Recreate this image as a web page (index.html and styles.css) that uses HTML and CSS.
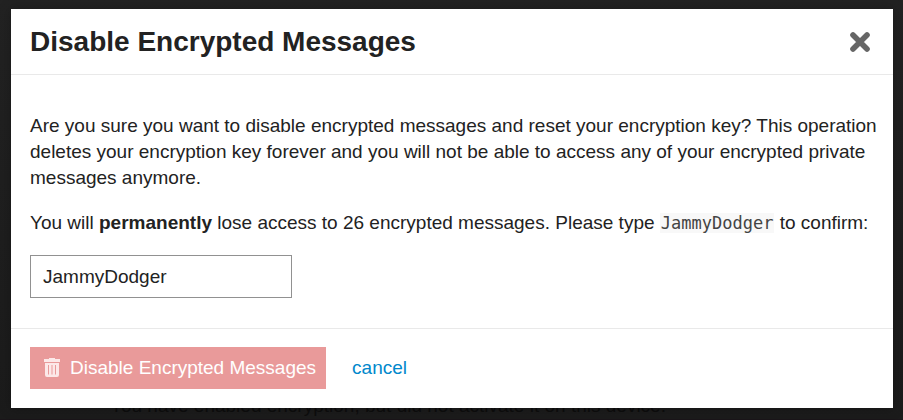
FILE: index.html
```
<!DOCTYPE html>
<html lang="en">
<head>
<meta charset="utf-8">
<title>Disable Encrypted Messages</title>
<link rel="stylesheet" href="styles.css">
</head>
<body>
<main class="page">
  <p class="notice">You have enabled encryption, but did not activate it on this device.</p>
</main>
<div class="overlay">
  <form class="modal" role="dialog" aria-labelledby="modal-title">
    <header class="modal-header">
      <h1 id="modal-title">Disable Encrypted Messages</h1>
      <button class="close" type="button" aria-label="Close">
        <svg width="20" height="20" viewBox="0 0 20 20"><path d="M3 3L17 17M17 3L3 17" stroke="currentColor" stroke-width="5.6" stroke-linecap="round"/></svg>
      </button>
    </header>
    <div class="modal-body">
      <p>Are you sure you want to disable encrypted messages and reset your encryption key? This operation deletes your encryption key forever and you will not be able to access any of your encrypted private messages anymore.</p>
      <p><label for="confirm">You will <b>permanently</b> lose access to 26 encrypted messages. Please type <code>JammyDodger</code> to confirm:</label></p>
      <input id="confirm" class="confirm" type="text" value="JammyDodger">
    </div>
    <footer class="modal-footer">
      <button class="danger" type="submit" disabled>
        <svg width="16" height="20" viewBox="0 0 16 20"><path fill="currentColor" fill-rule="evenodd" d="M0 1h5V0h6v1h5v3H0zM1 5h14v12q0 2-2 2H3q-2 0-2-2zM4 7v9.500h1V7zM7.500 7v9.500h1V7zM11 7v9.500h1V7z"/></svg>
        Disable Encrypted Messages
      </button>
      <a class="cancel" href="#">cancel</a>
    </footer>
  </form>
</div>
</body>
</html>
```
FILE: styles.css
```
* {
  box-sizing: border-box;
}

body {
  margin: 0;
  background: #1d1d1d;
  color: #222;
  font: 19px/26px "Liberation Sans", Arial, sans-serif;
}

.page {
  display: flex;
  flex-direction: column;
  justify-content: flex-end;
  height: 100vh;
  border-bottom: 1px solid #1a1519;
  background: linear-gradient(#222, #1b1b1b);
}

.notice {
  margin: 0;
  padding: 0 0 0 110px;
  color: #0d0d0d;
}

.overlay {
  position: absolute;
  inset: 0;
  padding: 9px 10px 12px 11px;
}

.modal {
  background: #fff;
  box-shadow: 0 0 12px rgba(0, 0, 0, 0.25);
}

.modal-header {
  display: flex;
  align-items: center;
  justify-content: space-between;
  padding: 16px 23px 16px 19px;
  border-bottom: 1px solid #e9e9e9;
}

h1 {
  margin: 0;
  font-size: 28px;
  line-height: 33px;
}

.close {
  display: flex;
  padding: 0;
  border: 0;
  background: none;
  color: #666;
}

.modal-body {
  padding: 38px 10px 30px 19px;
}

.modal-body p {
  margin: 0 0 19px;
}

code {
  padding: 0 1px;
  background: #f8f8f8;
  color: #444;
  font: 17px/20px "DejaVu Sans Mono", monospace;
}

.confirm {
  display: block;
  width: 262px;
  height: 43px;
  padding: 0 12px;
  border: 1px solid #919191;
  background: #fff;
  color: #222;
  font: inherit;
}

.modal-footer {
  display: flex;
  align-items: center;
  gap: 26px;
  padding: 18px 19px 19px;
  border-top: 1px solid #e9e9e9;
}

.danger {
  display: flex;
  align-items: center;
  gap: 10px;
  padding: 8px 10px 8px 14px;
  border: 0;
  background: #e99a9a;
  color: #fff;
  font: inherit;
}

.danger svg {
  color: #fce8e8;
}

.cancel {
  color: #0088cc;
  text-decoration: none;
}
```
